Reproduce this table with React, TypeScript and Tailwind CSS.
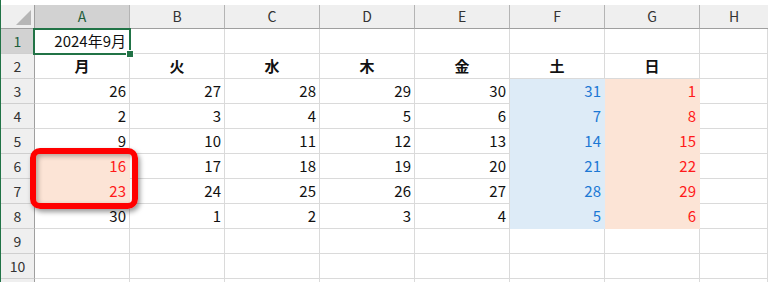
const COLS = ["A", "B", "C", "D", "E", "F", "G", "H"];
const DAYS = ["月", "火", "水", "木", "金", "土", "日"];

const WEEKS: number[][] = [
  [26, 27, 28, 29, 30, 31, 1],
  [2, 3, 4, 5, 6, 7, 8],
  [9, 10, 11, 12, 13, 14, 15],
  [16, 17, 18, 19, 20, 21, 22],
  [23, 24, 25, 26, 27, 28, 29],
  [30, 1, 2, 3, 4, 5, 6],
];

const font = "font-['Noto_Sans_CJK_JP','Noto_Sans',sans-serif]";

function cellStyle(row: number, col: number) {
  // row is the sheet row number (3..8 hold the dates)
  const inDates = row >= 3 && row <= 8;
  if (inDates && col === 5) return "bg-[#ddebf7] border-[#ddebf7] text-[#1c78d4]";
  if (inDates && col === 6) return "bg-[#fce4d6] border-[#fce4d6] text-[#ff1a1a]";
  if (col === 0 && (row === 6 || row === 7)) return "bg-[#fce4d6] border-[#fce4d6] text-[#ff1a1a]";
  return "bg-white border-[#dadada] text-[#111]";
}

function Cell({ row, col }: { row: number; col: number }) {
  let content: React.ReactNode = null;
  let align = "justify-end pr-[3px]";
  if (row === 1 && col === 0) content = "2024年9月";
  if (row === 2 && col < 7) {
    content = DAYS[col];
    align = "justify-center font-bold";
  }
  if (row >= 3 && row <= 8 && col < 7) content = WEEKS[row - 3][col];
  return (
    <div className={`flex items-center border-r border-b text-[15px] ${align} ${cellStyle(row, col)}`}>
      {content}
    </div>
  );
}

export default function App() {
  // row 11 only peeks in at the bottom edge, its label stays below the fold
  const rows = Array.from({ length: 11 }, (_, i) => i + 1);
  return (
    <div className={`relative flex w-[768px] h-[282px] overflow-hidden bg-white ${font}`}>
      <div className="w-px shrink-0 bg-[#217346]" />
      <div className="flex-1 flex flex-col">
        <div className="h-[5px] shrink-0" />
        <div className="grid grid-cols-[34px_repeat(7,95px)_1fr] grid-rows-[24px_repeat(11,25px)]">
          <div className="flex items-end justify-end pr-[2px] pb-[2px] bg-[#efefef] border-r border-b border-[#9f9f9f]">
            <svg width="16" height="16" viewBox="0 0 16 16">
              <polygon points="15,0 15,15 0,15" fill="#b6b6b6" />
            </svg>
          </div>
          {COLS.map((c, i) => (
            <div
              key={c}
              className={`flex items-center justify-center text-[14px] border-b border-b-[#9f9f9f] ${
                i === 0 ? "bg-[#d2d2d2] text-[#1e5e3b]" : "bg-[#efefef] text-[#333]"
              } ${i < 7 ? "border-r border-r-[#b4b4b4]" : ""}`}
            >
              {c}
            </div>
          ))}
          {rows.map((r) => (
            <div key={r} className="contents">
              <div
                className={`flex items-center justify-center text-[14px] border-r border-r-[#9f9f9f] border-b border-b-[#cfcfcf] ${
                  r === 1 ? "bg-[#d2d2d2] text-[#1e5e3b]" : "bg-[#efefef] text-[#333]"
                }`}
              >
                {r < 11 ? r : null}
              </div>
              {COLS.map((c, i) => (
                <Cell key={c} row={r} col={i} />
              ))}
            </div>
          ))}
        </div>
      </div>

      {/* active cell A1 */}
      <div className="absolute left-[33px] top-[28px] w-[98px] h-[27px] border-2 border-[#217346]" />
      <div className="absolute left-[127px] top-[51px] w-[6px] h-[6px] bg-[#217346] outline outline-1 outline-white" />

      {/* red highlight around A6:A7 */}
      <div className="absolute left-[30px] top-[148px] w-[108px] h-[61px] rounded-[10px] border-[6px] border-[#ff0000] shadow-[2px_3px_5px_rgba(0,0,0,0.4),inset_2px_2px_5px_rgba(0,0,0,0.3)]" />
    </div>
  );
}
